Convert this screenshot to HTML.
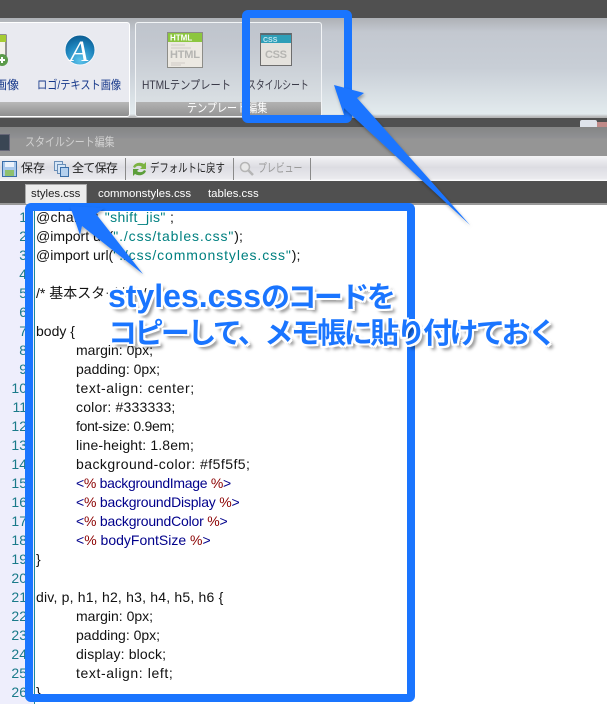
<!DOCTYPE html>
<html><head><meta charset="utf-8"><style>
html,body{margin:0;padding:0}
body{width:607px;height:704px;position:relative;overflow:hidden;background:#fff;font-family:"Liberation Sans","Noto Sans CJK JP",sans-serif}
div{position:absolute;white-space:pre;transform-origin:left top}
.band{left:0;width:607px}
.l{left:36px;margin-top:1px;font-size:14px;line-height:19px;height:19px;color:#111;font-family:"Liberation Sans","WenQuanYi Zen Hei",sans-serif}
.n{left:0;width:27px;margin-top:1px;text-align:right;font-size:14px;line-height:19px;color:#1a7a8a;overflow:visible}
.i{left:76px}
.t{color:#008080;letter-spacing:.9px}.r{color:#8b0000}
.bl{color:#00008b}
.tb{font-size:12px;line-height:18px;color:#222;top:159px;font-family:"Liberation Sans","WenQuanYi Zen Hei",sans-serif}
.tab{font-size:11.4px;line-height:16px;top:186px;color:#fff}
.sep{top:158px;width:1px;height:22px;background:#8a8a8a}
.cap{font-family:"Liberation Sans","Noto Sans CJK JP",sans-serif;font-weight:700;color:#1a75ff;font-size:29px;line-height:36px;letter-spacing:-2.55px;
text-shadow:2px 0 0 #fff,-2px 0 0 #fff,0 2px 0 #fff,0 -2px 0 #fff,2px 2px 0 #fff,-2px 2px 0 #fff,2px -2px 0 #fff,-2px -2px 0 #fff,4px 4px 3px rgba(0,0,0,.45)}
.lat{font-size:32px;letter-spacing:0}
</style></head><body>
<div class="band" style="top:0;height:18px;background:#505050"></div>
<div class="band" style="top:18px;height:100px;background:linear-gradient(#aeb1b6 0,#c3c8d0 14px,#c8ced6 50px,#e3ebee 96px,#b5b5b5 99px)"></div>
<div style="left:-10px;top:22px;width:138px;height:93px;background:#e9eaf0;border:1px solid #fff;border-radius:3px;overflow:hidden"><div style="left:0;top:79px;width:138px;height:15px;background:linear-gradient(#b8b8b8,#8c8c8c)"></div></div>
<div style="left:135px;top:22px;width:185px;height:93px;background:linear-gradient(#bfc4cc,#c3c8d0 25%,#dfe5e8);border:1px solid #f2f4f6;border-radius:3px;overflow:hidden"><div style="left:0;top:79px;width:185px;height:15px;background:linear-gradient(#b2b2b2,#939393)"></div></div>
<div style="left:187px;top:100px;font-size:12px;line-height:16px;color:#fff;transform:scaleX(.84)">テンプレート編集</div>

<svg style="position:absolute;left:0;top:30px" width="330" height="40">
<defs><radialGradient id="g" cx=".5" cy=".85" r=".85"><stop offset="0" stop-color="#5cc4ec"/><stop offset=".6" stop-color="#1d84bd"/><stop offset="1" stop-color="#0a5a90"/></radialGradient></defs>
<rect x="-10" y="5" width="16" height="28" fill="#f2f2ea" stroke="#333"/><rect x="-10" y="5" width="16" height="7" fill="#a6cc33"/><circle cx="2" cy="30" r="6" fill="#5a9a4a"/><path d="M-1 30h6M2 27v6" stroke="#fff" stroke-width="2"/>
<circle cx="80" cy="20" r="15" fill="url(#g)" stroke="#f4f6fa" stroke-width="1"/>
<text x="70" y="31" font-size="30" font-style="italic" fill="#fff" font-family="Liberation Serif">A</text>
<rect x="167.500" y="2.500" width="35" height="35" fill="#ece9e2" stroke="#8d8d88"/><rect x="168" y="3" width="34" height="9" fill="#8cc63f"/>
<path d="M171 15h14M171 18h20M171 33h14M171 35h10" stroke="#cfccc5" stroke-width="1"/>
<rect x="260.500" y="3.500" width="31" height="32" fill="#e4e2dd" stroke="#6d6d6d"/><rect x="261" y="4" width="30" height="9" fill="#2f9fb8"/><rect x="261" y="3" width="30" height="2" fill="#5a6a72"/>
<text x="170" y="10.500" font-size="8" font-weight="700" fill="#fff" font-family="Liberation Sans">HTML</text>
<text x="263" y="12" font-size="7" font-weight="700" fill="#bfe6ef" font-family="Liberation Sans">CSS</text>
<text x="170" y="28" font-size="11" font-weight="700" fill="#b5b5b2" font-family="Liberation Sans" textLength="30">HTML</text>
<text x="265" y="28" font-size="11" font-weight="700" fill="#b5b5b2" font-family="Liberation Sans" textLength="22">CSS</text>
</svg>
<div style="left:-5px;top:76px;font-size:12px;line-height:18px;color:#16388a">画像</div>
<div style="left:37px;top:76px;font-size:12px;line-height:18px;color:#16388a;transform:scaleX(.85)">ロゴ/テキスト画像</div>
<div style="left:142px;top:76px;font-size:12px;line-height:18px;color:#3a3a48;transform:scaleX(.853)">HTMLテンプレート</div>
<div style="left:247px;top:76px;font-size:12px;line-height:18px;color:#3a3a48;transform:scaleX(.735)">スタイルシート</div>

<div class="band" style="top:118px;height:9px;background:#505050"></div>
<div style="left:580px;top:120px;width:17px;height:7px;background:#dfe3ea;border-radius:2px 2px 0 0"></div>
<div style="left:597px;top:122px;width:10px;height:5px;background:#c08a88"></div>
<div class="band" style="top:127px;height:29px;background:linear-gradient(#858585,#8e8f92 10px,#959595 12px,#959595)"></div>
<div style="left:-2px;top:134px;width:10px;height:15px;background:#3a4654;border:1px solid #667"></div>
<div style="left:25px;top:133px;font-size:12px;line-height:18px;color:#d0d0d0;transform:scaleX(.83)">スタイルシート編集</div>
<div class="band" style="top:156px;height:25px;background:linear-gradient(#f4f4f6,#dcdce2 45%,#eaeaee 90%,#fff)"></div>

<svg style="position:absolute;left:0;top:158px" width="260" height="22">
<rect x="2.500" y="3.500" width="14" height="15" fill="#a8c8ec" stroke="#3a6ea8"/><rect x="5" y="4" width="9" height="5" fill="#eaf2fb"/><rect x="5" y="12" width="9" height="6" fill="#8fc06e"/>
<rect x="54.500" y="3.500" width="8" height="9" fill="#d6e6f6" stroke="#6a8fb8"/><rect x="57.500" y="6.500" width="8" height="9" fill="#d6e6f6" stroke="#6a8fb8"/><rect x="60.500" y="9.500" width="8" height="9" fill="#b4d0ee" stroke="#3a6ea8"/>
<path d="M133 9a7 6 0 0 1 11-3l2-2v7h-6l2-2a4 3 0 0 0-7 1z" fill="#7cb342"/><path d="M146 13a7 6 0 0 1-11 3l-2 2v-7h6l-2 2a4 3 0 0 0 7-1z" fill="#5c9e3a"/>
<circle cx="245" cy="9" r="4.500" fill="#e8e8e8" stroke="#b5b5b5" stroke-width="1.500"/><path d="M248 12l5 5" stroke="#b5b5b5" stroke-width="2.500"/>
</svg>
<div class="tb" style="left:21px">保存</div>
<div class="tb" style="left:72px;letter-spacing:-.7px">全て保存</div>
<div class="tb" style="left:150px;transform:scaleX(.78)">デフォルトに戻す</div>
<div class="tb" style="left:258px;color:#9a9a9a;transform:scaleX(.74)">プレビュー</div>
<div class="sep" style="left:125px"></div>
<div class="sep" style="left:233px"></div>
<div class="sep" style="left:310px"></div>

<div class="band" style="top:181px;height:23px;background:#505050"></div>
<div class="band" style="top:203px;height:2px;background:#999"></div>
<div style="left:25px;top:184px;width:62px;height:20px;background:#ececec;border:1px solid #aaa;border-bottom:0;box-sizing:border-box"></div>
<div class="tab" style="left:31px;color:#222">styles.css</div>
<div class="tab" style="left:98px">commonstyles.css</div>
<div class="tab" style="left:208px">tables.css</div>

<div style="left:0;top:205px;width:34px;height:499px;background:#eeeefc"></div>
<div style="left:34px;top:205px;width:1px;height:499px;background:#1a8a9a"></div>

<div class="n" style="top:207px">1</div><div class="n" style="top:226px">2</div><div class="n" style="top:245px">3</div><div class="n" style="top:264px">4</div><div class="n" style="top:283px">5</div><div class="n" style="top:302px">6</div><div class="n" style="top:321px">7</div><div class="n" style="top:340px">8</div><div class="n" style="top:359px">9</div><div class="n" style="top:378px">10</div><div class="n" style="top:397px">11</div><div class="n" style="top:416px">12</div><div class="n" style="top:435px">13</div><div class="n" style="top:454px">14</div><div class="n" style="top:473px">15</div><div class="n" style="top:492px">16</div><div class="n" style="top:511px">17</div><div class="n" style="top:530px">18</div><div class="n" style="top:549px">19</div><div class="n" style="top:568px">20</div><div class="n" style="top:587px">21</div><div class="n" style="top:606px">22</div><div class="n" style="top:625px">23</div><div class="n" style="top:644px">24</div><div class="n" style="top:663px">25</div><div class="n" style="top:682px">26</div>

<div class="l" style="top:207px;letter-spacing:.3px">@charset <span class="t" style="margin-left:2px;letter-spacing:.4px">"shift_jis"</span> ;</div>
<div class="l" style="top:226px">@import url(<span class="t">"./css/tables.css"</span>);</div>
<div class="l" style="top:245px">@import url(<span class="t">"./css/commonstyles.css"</span>);</div>
<div class="l" style="top:283px">/* 基本スタイル */</div>
<div class="l" style="top:321px">body {</div>
<div class="l i" style="top:340px">margin: 0px;</div>
<div class="l i" style="top:359px">padding: 0px;</div>
<div class="l i" style="top:378px;letter-spacing:.6px">text-align: center;</div>
<div class="l i" style="top:397px;letter-spacing:.2px">color: #333333;</div>
<div class="l i" style="top:416px;letter-spacing:-.3px">font-size: 0.9em;</div>
<div class="l i" style="top:435px;letter-spacing:.15px">line-height: 1.8em;</div>
<div class="l i" style="top:454px;letter-spacing:.45px">background-color: #f5f5f5;</div>
<div class="l i bl" style="top:473px;color:#00008b;letter-spacing:-.3px">&lt;<span class="r">%</span> backgroundImage <span class="r">%</span>&gt;</div>
<div class="l i bl" style="top:492px;color:#00008b;letter-spacing:-.2px">&lt;<span class="r">%</span> backgroundDisplay <span class="r">%</span>&gt;</div>
<div class="l i bl" style="top:511px;color:#00008b;letter-spacing:-.2px">&lt;<span class="r">%</span> backgroundColor <span class="r">%</span>&gt;</div>
<div class="l i bl" style="top:530px;color:#00008b">&lt;<span class="r">%</span> bodyFontSize <span class="r">%</span>&gt;</div>
<div class="l" style="top:549px">}</div>
<div class="l" style="top:587px;letter-spacing:.2px">div, p, h1, h2, h3, h4, h5, h6 {</div>
<div class="l i" style="top:606px">margin: 0px;</div>
<div class="l i" style="top:625px">padding: 0px;</div>
<div class="l i" style="top:644px;letter-spacing:.15px">display: block;</div>
<div class="l i" style="top:663px;letter-spacing:.6px">text-align: left;</div>
<div class="l" style="top:682px">}</div>

<svg style="position:absolute;left:0;top:0" width="607" height="704">
<defs><filter id="s" x="-20%" y="-20%" width="140%" height="140%"><feDropShadow dx="1" dy="2" stdDeviation="1.500" flood-color="#000" flood-opacity=".35"/></filter></defs>
<rect x="246" y="14" width="102" height="105" rx="2" fill="none" stroke="#1a75ff" stroke-width="8"/>
<rect x="29" y="207" width="382" height="491" rx="2" fill="none" stroke="#1a75ff" stroke-width="8"/>
<path d="M334 85L364 93 357 98 470 225 344 108 344 115Z" fill="#1a75ff" filter="url(#s)"/>
<path d="M70 206L104 208 96 214 143 274 82 226 80 235Z" fill="#1a75ff" filter="url(#s)"/>
</svg>

<div class="cap" style="left:108px;top:278px"><span class="lat">styles.css</span>のコードを</div>
<div class="cap" style="left:108px;top:316px">コピーして、メモ帳に貼り付けておく</div>
</body></html>
